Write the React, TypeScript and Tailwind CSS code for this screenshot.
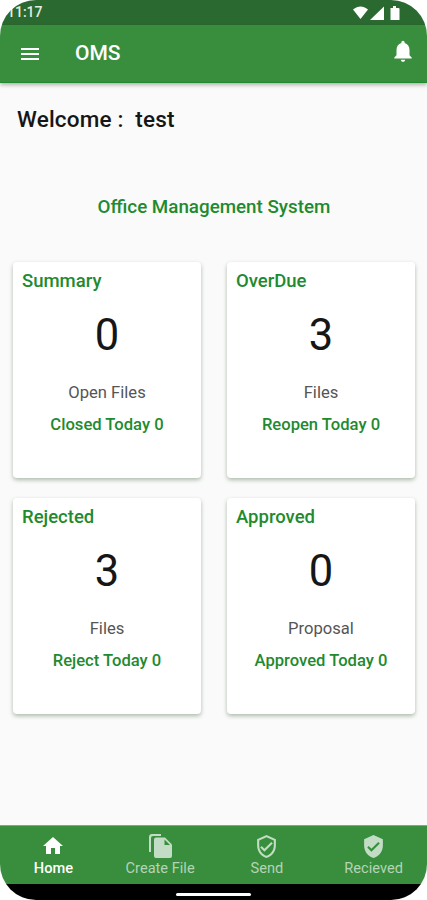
const MenuIcon = () => (
  <svg width="24" height="24" viewBox="0 0 24 24" fill="white">
    <path d="M3 18h18v-2H3v2zm0-5h18v-2H3v2zm0-7v2h18V6H3z" />
  </svg>
);

const BellIcon = () => (
  <svg width="26" height="26" viewBox="0 0 24 24" fill="white">
    <path d="M12 22c1.1 0 2-.9 2-2h-4c0 1.1.9 2 2 2zm6-6v-5c0-3.07-1.63-5.64-4.5-6.32V4c0-.83-.67-1.5-1.5-1.5s-1.5.67-1.5 1.5v.68C7.64 5.36 6 7.92 6 11v5l-2 2v1h16v-1l-2-2z" />
  </svg>
);

const HomeIcon = () => (
  <svg width="24" height="24" viewBox="0 0 24 24" fill="white">
    <path d="M10 20v-6h4v6h5v-8h3L12 3 2 12h3v8z" />
  </svg>
);

const FileIcon = () => (
  <svg width="23" height="24" viewBox="0 0 23 24" fill="#c3dcc5">
    <path d="M3 0h9v2H4a2 2 0 0 0-2 2v14H0V3a3 3 0 0 1 3-3z" />
    <path d="M7 3.500h9l7 7V22a2 2 0 0 1-2 2H7a2 2 0 0 1-2-2V5.500a2 2 0 0 1 2-2z" />
    <path d="M15.500 5.500v5.500H21z" fill="#388e3c" />
  </svg>
);

const ShieldOutlineIcon = () => (
  <svg width="25" height="25" viewBox="0 0 24 24" fill="#c3dcc5">
    <path d="M12 1 3 5v6c0 5.55 3.84 10.74 9 12 5.16-1.26 9-6.45 9-12V5l-9-4zm7 10c0 4.52-2.98 8.69-7 9.93-4.02-1.24-7-5.41-7-9.93V6.3l7-3.11 7 3.11V11zm-11.59.59L6 13l4 4 8-8-1.41-1.42L10 14.17z" />
  </svg>
);

const ShieldFilledIcon = () => (
  <svg width="25" height="25" viewBox="0 0 24 24" fill="#c3dcc5">
    <path d="M12 1 3 5v6c0 5.55 3.84 10.74 9 12 5.16-1.26 9-6.45 9-12V5l-9-4zm-2 16-4-4 1.41-1.41L10 14.17l6.59-6.59L18 9l-8 8z" />
  </svg>
);

const StatusIcons = () => (
  <svg width="47" height="16" viewBox="0 0 47 16" fill="white">
    <path d="M0 4.500C2.500 2.500 5.200 1.500 7.500 1.500s5 1 7.500 3L7.500 14z" />
    <path d="M17 15 31 1.500V15z" />
    <path d="M37.500 3H40V1h3v2h2.500a1 1 0 0 1 1 1v11h-9z" />
  </svg>
);

type CardProps = {
  title: string;
  count: string;
  label: string;
  footer: string;
};

const Card = ({ title, count, label, footer }: CardProps) => (
  <div className="h-[216px] rounded-[4px] bg-white px-[9px] pt-[7px] shadow-[0_2px_4px_rgba(30,70,30,0.35)]">
    <div className="text-[18.5px] leading-[24px] font-medium text-[#1f8a2e]">{title}</div>
    <div className="mt-[17px] text-center text-[43.5px] leading-[52px] text-[#161616]">{count}</div>
    <div className="mt-[21px] text-center text-[16.6px] leading-[20px] text-[#555555]">{label}</div>
    <div className="mt-[12px] text-center text-[16.6px] leading-[20px] font-medium text-[#1f8a2e]">{footer}</div>
  </div>
);

type NavItemProps = {
  icon: React.ReactNode;
  label: string;
  active?: boolean;
};

const NavItem = ({ icon, label, active }: NavItemProps) => (
  <div className="flex w-[107px] flex-col items-center">
    <div className="flex h-[26px] items-center justify-center">{icon}</div>
    <div className={`text-[14.6px] leading-[18px] ${active ? "font-medium text-white" : "text-[#b5d3b7]"}`}>{label}</div>
  </div>
);

export default function App() {
  return (
    <div className="relative flex h-[900px] w-[427px] flex-col overflow-hidden bg-[#fafafa] font-['Roboto',sans-serif]">
      {/* Status bar */}
      <div className="flex h-[25px] items-center justify-between bg-[#2a6a30] pr-[27px] pl-[7px]">
        <span className="text-[14px] font-medium text-[#e4ece4]">11:17</span>
        <StatusIcons />
      </div>

      {/* App bar */}
      <div className="flex h-[58px] items-center border-b border-[#1f8a2e] bg-[#388e3c] pr-[11px] pl-[18px] shadow-[0_2px_4px_rgba(0,0,0,0.3)]">
        <MenuIcon />
        <span className="ml-[33px] text-[21px] font-medium text-white">OMS</span>
        <div className="mt-[-6px] ml-auto">
          <BellIcon />
        </div>
      </div>

      {/* Main */}
      <main className="flex-1 pr-[12px] pl-[13px]">
        <div className="mt-[22px] ml-[4px] text-[22.5px] leading-[28px] font-medium tracking-[0.2px] text-[#161616]">
          Welcome :&nbsp; test
        </div>
        <div className="mt-[62px] text-center text-[18.8px] leading-[24px] font-medium text-[#1f8a2e]">
          Office Management System
        </div>
        <div className="mt-[43px] grid grid-cols-2 gap-x-[26px] gap-y-[20px]">
          <Card title="Summary" count="0" label="Open Files" footer="Closed Today 0" />
          <Card title="OverDue" count="3" label="Files" footer="Reopen Today 0" />
          <Card title="Rejected" count="3" label="Files" footer="Reject Today 0" />
          <Card title="Approved" count="0" label="Proposal" footer="Approved Today 0" />
        </div>
      </main>

      {/* Bottom nav */}
      <div className="flex h-[59px] border-t border-[#66bb6a] bg-[#388e3c] pt-[7px]">
        <NavItem icon={<HomeIcon />} label="Home" active />
        <NavItem icon={<FileIcon />} label="Create File" />
        <NavItem icon={<ShieldOutlineIcon />} label="Send" />
        <NavItem icon={<ShieldFilledIcon />} label="Recieved" />
      </div>
      <div className="flex h-[16px] items-end justify-center bg-black pb-[4px]">
        <div className="h-[3px] w-[75px] rounded-full bg-white" />
      </div>

      {/* Screen corners */}
      <div className="pointer-events-none absolute inset-0 rounded-[36px] shadow-[0_0_0_40px_white]" />
    </div>
  );
}
